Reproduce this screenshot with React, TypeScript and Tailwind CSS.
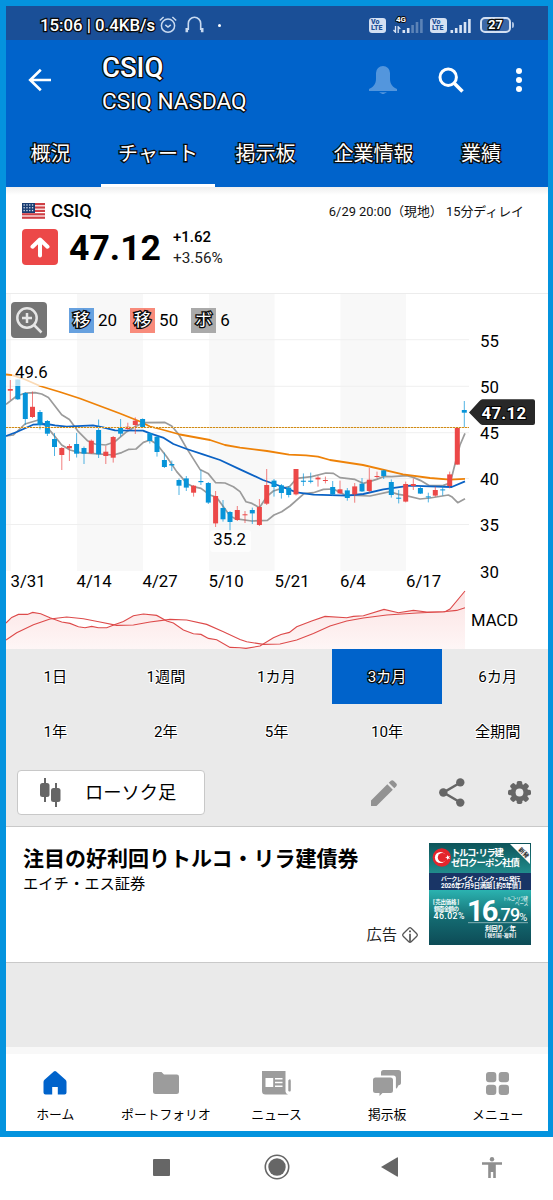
import { clsx } from "clsx";

const OUTLINE = "text-white [-webkit-text-stroke:2.6px_#0a0a0a] [paint-order:stroke_fill]";

// Chart data
// x, wick top, wick bottom, body top, body bottom, direction
type Candle = [number, number, number, number, number, "u" | "d"];

const CANDLES: Candle[] = [
  [10.3, 380, 400, 389, 390.7, "u"],
  [17.8, 379.5, 400, 379.5, 399.3, "d"],
  [25.3, 392, 425, 393, 419, "d"],
  [32.5, 391.5, 418, 406.8, 417, "u"],
  [40, 410, 429.5, 412, 425, "d"],
  [47.4, 420, 436, 421, 433.7, "d"],
  [54.5, 433, 456, 439, 447, "d"],
  [61.8, 447, 470, 448, 455, "u"],
  [69.4, 444, 461, 446, 448.3, "u"],
  [76.6, 433, 457.5, 444, 453.7, "d"],
  [84, 446.5, 464, 448, 453.7, "d"],
  [91.3, 439.5, 454, 440.7, 453.3, "u"],
  [98.6, 419.5, 458, 430, 454.3, "d"],
  [105.8, 446, 464, 451.7, 456, "u"],
  [113.2, 436, 462.6, 437, 457.7, "u"],
  [120.6, 419, 436.6, 428, 433.7, "d"],
  [127.8, 422.7, 430, 426.7, 429, "u"],
  [135.3, 417.4, 434, 420.7, 425, "u"],
  [142.6, 418.4, 428, 419, 427, "d"],
  [149.8, 432, 443.5, 433.4, 441, "d"],
  [157, 436, 456.6, 436.7, 452, "d"],
  [164.4, 452.6, 468, 460, 467, "d"],
  [171.8, 460.6, 471, 464, 465.5, "d"],
  [179, 478.5, 495, 480, 485.7, "d"],
  [186.3, 476, 491, 478.4, 487.6, "d"],
  [193.6, 485, 496.6, 485.7, 492.7, "u"],
  [200.9, 470, 485, 481, 482.2, "d"],
  [208.3, 482, 504, 483, 502.6, "d"],
  [215.6, 491, 527, 496, 523.4, "u"],
  [223, 500, 521.6, 508, 519.3, "d"],
  [230, 511, 531, 512, 522, "d"],
  [237.3, 506, 521, 510, 520, "u"],
  [245, 511, 523, 514.3, 515.3, "u"],
  [252.3, 507.6, 524, 510, 513.4, "d"],
  [259.4, 499, 526, 507, 525, "u"],
  [266.7, 469, 505, 485, 503.7, "u"],
  [274, 479, 496.6, 480.6, 487, "d"],
  [281.4, 484, 498.6, 485.3, 493, "d"],
  [288.7, 486, 497.4, 487.6, 495, "d"],
  [296, 469, 495.4, 469, 494.4, "u"],
  [303.4, 473.4, 486, 480.7, 481.8, "d"],
  [310.7, 472.6, 483.4, 480.7, 481.8, "d"],
  [318, 476, 486.6, 477.6, 479.4, "u"],
  [325.4, 476.6, 483.4, 480, 481, "u"],
  [332.7, 481, 496, 487, 494.4, "d"],
  [340, 480.6, 494, 489.3, 493.4, "u"],
  [347.3, 488, 500.7, 490.4, 498, "d"],
  [354.7, 483, 502.7, 486.4, 494.4, "u"],
  [362, 478, 492, 483.7, 491.4, "d"],
  [369.3, 468, 492.6, 479.7, 491, "u"],
  [377, 471.6, 478.4, 476, 477, "u"],
  [383.7, 469.7, 479, 470.4, 476, "d"],
  [391.3, 479.4, 497.6, 482, 495, "d"],
  [398.7, 490, 503.4, 497.7, 498.7, "d"],
  [405.7, 481.6, 502.4, 484, 501.6, "u"],
  [413.3, 478.4, 490, 484, 486, "u"],
  [420.4, 486.7, 494, 488, 493.6, "d"],
  [428.3, 492.7, 502.4, 496.4, 497.4, "d"],
  [435.3, 486.7, 496.7, 490, 495.6, "u"],
  [442.7, 486, 495.6, 489.4, 490.4, "d"],
  [449.7, 471.6, 488.4, 474.4, 486, "u"],
  [457.3, 427.7, 464.6, 427.7, 464.6, "u"],
  [464.3, 401, 427.3, 410, 412.7, "d"],
];

const MA50 =
  "6,374.5 12,375.2 24,379 40,386 60,392 80,398.5 100,406 120,413.5 140,421.5 150,426.5 160,429 180,434.5 210,440 225,445 240,447.6 267,451 289,454.7 306,455.3 318,456.6 330,460 363,465 403,474.3 430,478 450,479.7 465,478.8";
const MA20 =
  "6,436 16.7,432 33,424.7 46.7,424 55,425.4 66.7,426.6 93,425.3 103,427.4 115,430.4 143,430.6 150,433.4 163,437.6 173.4,444 186.7,449 203,454.4 220,460 240,469.4 263,480 280,486 296.6,492.4 313.4,494.6 346.7,495.6 363.4,494 383.4,489.4 410,485.6 430,486.4 451.7,487 465,481.4";
const BAND_HIGH =
  "6,404.4 16.7,396 25,393.2 35,392.7 41.7,394 48.4,397.4 61.7,414.7 69.4,419.4 78.4,431.7 87.4,440.7 95,444 105.7,445 115,441.7 126.7,431.7 135,426.7 143.4,422.7 165,422.4 171.7,426 178.4,434 186.7,448.4 200,469.4 208,473.4 215.7,482.7 225,483 233.4,486.7 240,491.6 246,501.7 252,503.4 259.4,507.7 266.7,496.7 273.4,491 281.7,488.4 289.4,486.7 296.7,478.4 311.7,476.6 326,473 333.4,473.4 340,477.6 355,479.4 363.4,483.4 376.7,479.4 384,476.4 391.7,476.6 406.7,475.6 413.4,477.4 420.7,480.6 429,485.6 443.4,485.4 450,483 452,476 457.3,455 460,445 465,433.4";
const BAND_LOW =
  "6,436 13.4,435 25,424 38.4,420 46.7,426.6 55,436.6 61.7,445 70,450 80,452.6 113.4,455 121.7,452.6 128.4,449.4 136,449 143.4,442.4 150,440 156.7,444 166.7,456.7 176.7,471.6 181.7,477.4 186.7,483.4 193.4,486.7 201,488.4 210,495 216.7,497.4 223.4,506.7 230,516 235,518.6 251.7,521 267.4,520.4 274,515 281.7,511.7 290,506 304,493.7 313.4,492.7 323.4,489.4 333.4,489 345,495 370,496 390,491.7 398.4,494.4 405,495.4 420,499 430,498 448.4,495 451.7,496.7 457.7,502.7 465,498.7";
const MACD =
  "6,623 11.7,617.4 18.4,614.4 27.4,614.4 32.7,612.4 40.7,613.7 50,617.7 61.7,622 70,623.4 78.4,626.7 85,627.7 91.7,626.4 98.4,627.7 106.7,627.7 115,624.4 123.4,621.4 133.4,615.7 143.4,614 156.7,615.4 166.7,621 173.4,623 183.4,630 193.4,633.7 201,634.4 208.4,638.4 216.7,639.7 230,647.4 240,647.7 246,648.4 260,646 273.4,637.7 281,634.5 289.4,632.4 296.7,626.7 311.7,621 325,616.4 346.7,617.7 353.4,616.4 363.4,615.7 384,609.4 398.4,612.7 413.4,610.4 426.7,612 445,611.7 450,609 465,591";
const SIGNAL =
  "6,640 16.7,632.7 33.4,624.7 50,619 66.7,617 83.4,618.7 100,622 116.7,625.4 133.4,625 150,622 170,619.4 186.7,620 206.7,624.4 223.4,631.7 240,639.4 246.7,641.7 263.4,644.4 280,644 296.7,640 313.4,633.4 330,626 346.7,621 363.4,618 386.7,615 416.7,613 443.4,611.7 456.7,610.4 465,607.7";

const GRID_Y = [339.7, 386.3, 432.7, 478.5, 524.5];
const STRIPES = [[6, 5], [77, 66], [209, 65.5], [340.5, 65.5]];
const PRICES = [
  { label: "55", y: 346.5 },
  { label: "50", y: 392.7 },
  { label: "45", y: 439 },
  { label: "40", y: 485 },
  { label: "35", y: 531.3 },
  { label: "30", y: 577.5 },
];
const DATES = [
  { label: "3/31", x: 10.5 },
  { label: "4/14", x: 76.5 },
  { label: "4/27", x: 142.5 },
  { label: "5/10", x: 208.5 },
  { label: "5/21", x: 274.5 },
  { label: "6/4", x: 340 },
  { label: "6/17", x: 406 },
];

const TABS = [
  { label: "概況", width: "w-[101px]" },
  { label: "チャート", width: "w-[114px]", active: true },
  { label: "掲示板", width: "w-[101px]" },
  { label: "企業情報", width: "w-[115px]" },
  { label: "業績", width: "w-[100px]" },
];

const PERIODS = ["1日", "1週間", "1カ月", "3カ月", "6カ月", "1年", "2年", "5年", "10年", "全期間"];

function VoLte() {
  return (
    <div className="flex h-[15px] w-[17px] flex-col rounded-[3px] bg-[#d3e0f2] px-[2px] pt-[1px] text-[7px] leading-[6.5px] font-black text-[#1b4f96]">
      <span>Vo</span>
      <span>LTE</span>
    </div>
  );
}

function Signal({ strong }: { strong: number }) {
  return (
    <svg width="22" height="15" viewBox="0 0 22 15" fill="#d9e4f4">
      {[3, 5, 8, 11, 14].map((h, i) => (
        <rect key={h} x={i * 4.4 + 0.5} y={15 - h} width="2.6" height={h} opacity={i < strong ? 1 : 0.35} />
      ))}
    </svg>
  );
}

function StatusBar() {
  return (
    <div className="flex h-10 items-center bg-[#1a4f97] pt-[10px] pl-10">
      <span className={clsx("w-[119px] text-[16.8px] leading-none font-medium whitespace-nowrap", OUTLINE)}>
        15:06 | 0.4KB/s
      </span>
      <svg width="18" height="18" viewBox="0 0 18 18" fill="none" stroke="#c9daf0" strokeWidth="1.5">
        <circle cx="9" cy="9.7" r="6.6" />
        <path d="M6.3 8.8 9 11l2.8-2.2M.8 4.5 4.6 1M17.2 4.5 13.4 1" />
      </svg>
      <svg className="ml-2" width="19" height="18" viewBox="0 0 19 18" fill="none" stroke="#c9daf0" strokeWidth="1.6">
        <path d="M3.3 14V7.5a6.2 6.2 0 0 1 12.4 0V14" />
        <path d="M1.8 12v4.3M17.2 12v4.3" strokeWidth="2.6" />
      </svg>
      <span className="ml-[14px] size-[3px] rounded-full bg-white" />
      <div className="ml-[148px]">
        <VoLte />
      </div>
      <div className="relative mr-[6px] ml-[16px]">
        <Signal strong={2} />
        <svg className="absolute top-[8px] -left-[9px]" width="8" height="7" viewBox="0 0 8 7" fill="none" stroke="#d9e4f4" strokeWidth="1.3">
          <path d="M2.5 0v6.200L.5 4M5.200 7V.8L7.300 3" />
        </svg>
        <span className="absolute -top-[2px] -left-[6px] text-[8px] leading-none font-bold text-white [-webkit-text-stroke:1.8px_#0a0a0a] [paint-order:stroke_fill]">
          4G
        </span>
      </div>
      <VoLte />
      <div className="mr-[8px] ml-[3px]">
        <Signal strong={5} />
      </div>
      <div className="flex h-4 w-[31px] items-center justify-center rounded-[5px] border-2 border-[#d3e0f2] bg-[#3b68a8]">
        <span className={clsx("text-[12.5px] leading-none font-bold", OUTLINE)}>27</span>
      </div>
      <span className="ml-px h-[6px] w-[2px] rounded-r bg-[#a9c0e0]" />
    </div>
  );
}

function Header() {
  return (
    <header className="h-[147px] bg-[#0063cb]">
      <div className="flex h-[79px] items-center">
        <svg className="ml-[28px]" width="24" height="24" viewBox="0 0 24 24" fill="none" stroke="#fff" strokeWidth="2.6">
          <path d="M23 12H2.5M12.8 1.8 2.2 12l10.6 10.2" />
        </svg>
        <div className="ml-[50px] w-[267px] pt-[9px]">
          <h1 className={clsx("text-[27.5px] leading-[34px] font-medium", OUTLINE)}>CSIQ</h1>
          <p className={clsx("text-[22.6px] leading-[33px]", OUTLINE)}>CSIQ NASDAQ</p>
        </div>
        <svg width="28" height="28" viewBox="0 0 28 28" fill="#5396dd">
          <path d="M14 0a7 7 0 0 1 7 7v6c0 5 3 8.5 7 10v2H0v-2c4-1.500 7-5 7-10V7a7 7 0 0 1 7-7Z" />
          <path d="M10 26.300h8l-4 2z" />
        </svg>
        <svg className="ml-[41px]" width="26" height="26" viewBox="0 0 26 26" fill="none" stroke="#fff">
          <circle cx="10.2" cy="10.2" r="8.2" strokeWidth="3" />
          <path d="m16 16 8.500 8.500" strokeWidth="3.6" />
        </svg>
        <svg className="ml-[52px]" width="6" height="24" viewBox="0 0 6 24" fill="#fff">
          <circle cx="3" cy="3" r="3" />
          <circle cx="3" cy="12" r="3" />
          <circle cx="3" cy="21" r="3" />
        </svg>
      </div>
      <nav className="flex h-[68px]">
        {TABS.map((tab) => (
          <div
            key={tab.label}
            className={clsx(
              "flex items-center justify-center border-b-[3px] pt-[4px] text-[20px] leading-none whitespace-nowrap",
              tab.width,
              tab.active ? "border-white" : "border-transparent",
              OUTLINE,
            )}
          >
            {tab.label}
          </div>
        ))}
      </nav>
    </header>
  );
}

function UsFlag() {
  return (
    <svg width="23" height="16" viewBox="0 0 23 16">
      <rect width="23" height="16" fill="#fff" />
      {[0, 1, 2, 3, 4].map((i) => (
        <rect key={i} y={i * 3.4} width="23" height="2.2" fill="#cf3f45" />
      ))}
      <rect width="13" height="10" fill="#193d73" />
      {[1.8, 4.6, 7.4].map((y) =>
        [1.5, 4.3, 7.1, 9.9].map((x) => (
          <rect key={`${x}-${y}`} x={x} y={y - 0.5} width="1.3" height="1.3" fill="#dfe6f0" />
        )),
      )}
    </svg>
  );
}

function Quote() {
  return (
    <section className="flex h-[106px] justify-between bg-gradient-to-b from-[#eeeeee] via-white via-[8px] to-white pt-[14px] pr-[29px] pl-[22px]">
      <div>
        <div className="flex h-5 items-center gap-[6px]">
          <UsFlag />
          <span className="pt-px text-[18.3px] leading-none font-medium">CSIQ</span>
        </div>
        <div className="mt-2 flex h-9 items-center">
          <div className="flex size-9 items-center justify-center rounded-[4px] bg-[#ec4848]">
            <svg width="20" height="21" viewBox="0 0 20 21" fill="none" stroke="#fff" strokeWidth="4" strokeLinecap="round" strokeLinejoin="round">
              <path d="M10 18.500V3M2.500 9.700 10 2.500l7.500 7.200" />
            </svg>
          </div>
          <span className="ml-[11px] w-[104px] pt-[3px] text-[35.600px] leading-none font-bold">47.12</span>
          <div className="pt-px">
            <div className="text-[15px] leading-[21px] font-medium">+1.62</div>
            <div className="text-[15.3px] leading-[21px] text-[#222]">+3.56%</div>
          </div>
        </div>
      </div>
      <div className="h-5 pt-px text-[12.9px] leading-5 whitespace-pre text-[#111]">6/29 20:00（現地） 15分ディレイ</div>
    </section>
  );
}

function Legend({ mark, value, color }: { mark: string; value: string; color: string }) {
  return (
    <div className="flex items-center gap-1">
      <span className={clsx("flex size-[25px] items-center justify-center pt-px text-[17.5px] leading-none", color, OUTLINE)}>{mark}</span>
      <span className="pt-px text-[17px] leading-none">{value}</span>
    </div>
  );
}

function Chart() {
  return (
    <section className="relative h-[356px] bg-white">
      <svg className="block" width="553" height="356" viewBox="0 293 553 356" fontSize="16.8">
        <defs>
          <linearGradient id="macdFill" x1="0" y1="0" x2="0" y2="1">
            <stop offset="0" stopColor="#e94b4b" stopOpacity="0.16" />
            <stop offset="1" stopColor="#e94b4b" stopOpacity="0.05" />
          </linearGradient>
        </defs>
        {STRIPES.map(([x, w]) => (
          <rect key={x} x={x} y="293" width={w} height="278" fill="#f8f8f8" />
        ))}
        <rect y="293" width="553" height="1" fill="#ececec" />
        {GRID_Y.map((y) => (
          <path key={y} d={`M6 ${y}H469`} stroke="#efefef" />
        ))}
        <g fill="none" strokeLinejoin="round">
          <polyline points={BAND_HIGH} stroke="#9b9b9b" strokeWidth="1.7" />
          <polyline points={BAND_LOW} stroke="#9b9b9b" strokeWidth="1.7" />
          <polyline points={MA50} stroke="#ee8208" strokeWidth="1.8" />
          <polyline points={MA20} stroke="#0b62c4" strokeWidth="1.8" />
        </g>
        {CANDLES.map(([x, hi, lo, top, bottom, dir]) => {
          const fill = dir === "u" ? "#ec4848" : "#0794d9";
          return (
            <g key={x} fill={fill}>
              <rect x={x - 0.5} y={hi} width="1" height={lo - hi} opacity="0.7" />
              <rect x={x - 2.5} y={top} width="5" height={bottom - top} />
            </g>
          );
        })}
        <path d="M6 427.500H469" stroke="#f3d9a4" />
        <path d="M6 427.500H469" stroke="#cf8a18" strokeDasharray="2 1" />

        <rect x="12" y="364" width="40" height="22" rx="3" fill="#fff" opacity="0.7" />
        <text x="15" y="377.700">49.6</text>
        <rect x="210" y="530" width="41" height="22" rx="3" fill="#fff" opacity="0.7" />
        <text x="213.300" y="545">35.2</text>

        {PRICES.map((p) => (
          <text key={p.label} x="480" y={p.y}>{p.label}</text>
        ))}
        {DATES.map((d) => (
          <text key={d.label} x={d.x} y="586.500">{d.label}</text>
        ))}
        <path d="M469 412.500 479.500 401q1.500-1.700 3-1.700H533q2 0 2 2V423q0 2-2 2H482.500q-1.500 0-3-1.700Z" fill="#282828" />
        <text x="481.500" y="419.200" fontWeight="700" fill="#fff" stroke="#000" strokeWidth="2" paintOrder="stroke" letterSpacing=".3">
          47.12
        </text>

        <polygon points={`6,649 ${MACD} 465,649`} fill="url(#macdFill)" />
        <polyline points={MACD} fill="none" stroke="#dd4a4a" strokeWidth="1.1" />
        <polyline points={SIGNAL} fill="none" stroke="#dd4a4a" strokeWidth="1.1" />
        <text x="471" y="625.700" fontSize="16.6">MACD</text>
      </svg>

      <div className="absolute top-[9px] left-[11px] flex items-center">
        <div className="flex size-9 items-center justify-center rounded-[4px] bg-[#757575]">
          <svg width="28" height="28" viewBox="0 0 28 28" fill="none" stroke="#e6e6e6" strokeWidth="2.5">
            <circle cx="12" cy="12" r="9.7" />
            <path d="M12 7v10M7 12h10M19 19l7.500 7.500" />
          </svg>
        </div>
        <div className="ml-[22px] flex gap-[13px]">
          <Legend mark="移" value="20" color="bg-[#67a1df]" />
          <Legend mark="移" value="50" color="bg-[#f88b7b]" />
          <Legend mark="ボ" value="6" color="bg-[#aaaaaa]" />
        </div>
      </div>
    </section>
  );
}

function Periods() {
  return (
    <div className="grid h-[110px] grid-cols-5 bg-[#eaeaea]">
      {PERIODS.map((p) => (
        <div
          key={p}
          className={clsx(
            "flex h-[55px] items-center justify-center pt-[2px] text-[15.200px] leading-none",
            p === "3カ月" ? `bg-[#0063cb] ${OUTLINE}` : "[-webkit-text-stroke:2px_#fff] [paint-order:stroke_fill]",
          )}
        >
          {p}
        </div>
      ))}
    </div>
  );
}

function Toolbar() {
  return (
    <div className="flex h-[67px] items-center bg-[#eaeaea] pl-[17px]">
      <div className="flex h-[45px] w-[188px] items-center rounded-[4px] border border-[#c8c8c8] bg-white pl-[22px]">
        <svg width="21" height="29" viewBox="0 0 21 29" fill="#666">
          <rect x="4" width="2" height="24" />
          <rect y="5" width="9.5" height="14" rx="2.5" />
          <rect x="15" y="5" width="2" height="24" />
          <rect x="11" y="10" width="9.5" height="14" rx="2.5" />
        </svg>
        <span className="ml-6 pt-[2px] text-[18.3px] leading-none">ローソク足</span>
      </div>
      <svg className="ml-[166px]" width="26" height="26" viewBox="0 0 26 26" fill="#929292">
        <path d="M0 26v-5.500L16.300 4.200l5.500 5.500L5.500 26ZM17.800 2.700 19.600.9q1.600-1.500 3.200 0l2.300 2.300q1.600 1.600 0 3.200l-1.800 1.800Z" />
      </svg>
      <svg className="ml-[42px]" width="26" height="29" viewBox="0 0 26 29" fill="#666">
        <path d="M21.500 4.500 4.500 14.500l17 10" fill="none" stroke="#666" strokeWidth="2.6" />
        <circle cx="21.3" cy="4.4" r="4.2" />
        <circle cx="4.3" cy="14.5" r="4.2" />
        <circle cx="21.3" cy="24.6" r="4.2" />
      </svg>
      <svg className="ml-[43px]" width="23" height="23" viewBox="0 0 23 23">
        <g fill="#666">
          {[0, 45, 90, 135].map((a) => (
            <rect key={a} x="8.7" y="0" width="5.6" height="23" rx="1.8" transform={`rotate(${a} 11.5 11.5)`} />
          ))}
          <circle cx="11.5" cy="11.5" r="8.8" />
        </g>
        <circle cx="11.5" cy="11.5" r="3.9" fill="#eaeaea" />
      </svg>
    </div>
  );
}

function BondBanner() {
  return (
    <svg width="102" height="102" viewBox="0 0 102 102" fill="#fff">
      <defs>
        <linearGradient id="bannerTop" x1="0" y1="0" x2="0" y2="1">
          <stop offset="0" stopColor="#0d5359" />
          <stop offset="1" stopColor="#218c8c" />
        </linearGradient>
        <linearGradient id="bannerBottom" x1="0" y1="0" x2="0" y2="1">
          <stop offset="0" stopColor="#2bb3b0" />
          <stop offset="0.55" stopColor="#13686f" />
          <stop offset="1" stopColor="#0d4b56" />
        </linearGradient>
      </defs>
      <rect width="102" height="30" fill="url(#bannerTop)" />
      <rect y="30" width="102" height="17" fill="#193566" />
      <rect y="47" width="102" height="55" fill="url(#bannerBottom)" />
      <circle cx="12.8" cy="14.5" r="9.2" fill="#e4242c" />
      <circle cx="11.5" cy="14.5" r="5.6" />
      <circle cx="13.3" cy="14.5" r="4.5" fill="#e4242c" />
      <path d="m16 14.500 1.900-.6.100-2 1.200 1.600 1.900-.6-1.200 1.600 1.200 1.600-1.900-.6-1.200 1.600-.1-2Z" />
      <path d="M81 1h20v20Z" />
      <text x="89" y="7" fontSize="6" fontWeight="700" fill="#222" transform="rotate(45 89 7)">新発</text>
      <g fontWeight="700">
        <text x="22" y="12.8" fontSize="9.4" textLength="53">トルコ･リラ建</text>
        <text x="22" y="23" fontSize="9.4" textLength="69">ゼロクーポン社債</text>
        <text x="12" y="38" fontSize="5.8" textLength="79">バークレイズ・バンク・PLC 発行</text>
        <text x="12" y="45.300" fontSize="6.3" textLength="80">2026年7月9日満期 [ 約5年債 ]</text>
      </g>
      <text x="4" y="61" fontSize="5.5" fontWeight="700" textLength="26">[ 売出価格 ]</text>
      <text x="5" y="67.500" fontSize="5.5" fontWeight="700" textLength="25">額面金額の</text>
      <text x="4.500" y="76" fontSize="8.8" fontWeight="500" textLength="31">46.02%</text>
      <text x="38" y="78" fontSize="29" fontWeight="700" letterSpacing="-1.9">
        16
        <tspan fontSize="18" fontWeight="500" letterSpacing="-.9">.79</tspan>
        <tspan fontSize="11" fontWeight="400">%</tspan>
      </text>
      <text x="74" y="57" fontSize="4.5" textLength="25">トルコ･リラ建</text>
      <text x="86" y="62" fontSize="4.5">ベース</text>
      <rect x="39" y="79.5" width="60" height=".6" opacity="0.8" />
      <text x="56" y="88.300" fontSize="6.5" fontWeight="700" textLength="31">利回り／年</text>
      <text x="56" y="94" fontSize="4.8" fontWeight="700" textLength="31">[ 税引前･複利 ]</text>
    </svg>
  );
}

function AdCard() {
  return (
    <section className="flex h-[137px] border-y border-[#c9c9c9] bg-white pt-4 pl-[23px]">
      <div className="flex h-[102px] w-[395px] flex-col">
        <h2 className="pt-px text-[21px] leading-[30px] font-bold whitespace-nowrap">注目の好利回りトルコ・リラ建債券</h2>
        <p className="text-[15.3px] leading-[21px]">エイチ・エス証券</p>
        <div className="mt-[30px] flex items-center justify-end gap-[5px] text-[15.3px] leading-[20px] text-[#222]">
          広告
          <svg width="16" height="16" viewBox="0 0 16 16" fill="none" stroke="#555" strokeWidth="1.3">
            <path d="M6.800 1.200q1.200-1 2.400 0l5.600 5.600q1 1.200 0 2.400l-5.600 5.600q-1.200 1-2.400 0L1.200 9.200q-1-1.200 0-2.400Z" />
            <path d="M8 6.800V15" strokeWidth="1.7" />
            <path d="M8 3.500v1.800" strokeWidth="1.9" />
          </svg>
        </div>
      </div>
      <div className="ml-[11px]">
        <BondBanner />
      </div>
    </section>
  );
}

const NAV_ITEMS = [
  {
    label: "ホーム",
    icon: (
      <svg width="24" height="24" viewBox="0 0 24 24" fill="#0063cb">
        <path d="M10.800.6q1.200-1 2.400 0L22.500 8.800q1 1 1 2.200v10.500q0 2-2 2h-6.700V16H9.200v7.500H2.500q-2 0-2-2V11q0-1.200 1-2.200Z" />
      </svg>
    ),
  },
  {
    label: "ポートフォリオ",
    icon: (
      <svg width="26" height="22" viewBox="0 0 26 22" fill="#9c9c9c">
        <path d="M2 0h6.500L11 2.500h12.800q2.200 0 2.200 2.200v14.800Q26 22 23.500 22h-21Q0 22 0 19.500V2.200Q0 0 2 0Z" />
      </svg>
    ),
  },
  {
    label: "ニュース",
    icon: (
      <svg width="29" height="24" viewBox="0 0 29 24" fill="#9c9c9c">
        <path d="M0 0h23.500v20.500q0 2 2.500 3H3.500Q0 23.500 0 20Z" />
        <path d="M26.300 9.500q2.500-3 2.500 1v8.500q0 2.500-2.500 1Z" />
        <path d="M3.500 7h7.700v9H3.500ZM13 7h7.500v1.600H13ZM13 10.700h7.500v1.600H13ZM13 14.400h7.500V16H13Z" fill="#fff" />
      </svg>
    ),
  },
  {
    label: "掲示板",
    icon: (
      <svg width="28" height="26" viewBox="0 0 28 26" fill="#9c9c9c">
        <path d="M8 5.500V2.500Q8 0 10.500 0h15Q28 0 28 2.500v10q0 2.800-2.500 2.800l-1.800 3.500-.8-1V8q0-2.500-2.500-2.500Z" />
        <path d="M2.500 7.500H17.500q2.500 0 2.500 2.500v10.500q0 2.500-2.500 2.500H9.500L6.500 26v-3h-4Q0 23 0 20.500V10q0-2.500 2.500-2.500Z" />
      </svg>
    ),
  },
  {
    label: "メニュー",
    icon: (
      <svg width="23" height="23" viewBox="0 0 23 23" fill="#9c9c9c">
        <rect width="10.3" height="10.3" rx="3" />
        <rect x="12.7" width="10.3" height="10.3" rx="3" />
        <rect y="12.7" width="10.3" height="10.3" rx="3" />
        <rect x="12.7" y="12.7" width="10.3" height="10.3" rx="3" />
      </svg>
    ),
  },
];

function BottomNav() {
  return (
    <nav className="border-t-[7px] border-[#f8f8f8] bg-white">
      <div className="grid h-[83px] grid-cols-5">
        {NAV_ITEMS.map((item) => (
          <div key={item.label} className="flex flex-col items-center pt-4">
            <div className="flex h-[26px] items-center">{item.icon}</div>
            <span className="mt-[9px] text-[12.8px] leading-5 whitespace-nowrap">{item.label}</span>
          </div>
        ))}
      </div>
    </nav>
  );
}

function SystemNav() {
  return (
    <div className="grid h-[63px] grid-cols-5 items-center justify-items-center bg-white pb-[3px]">
      <span />
      <span className="-ml-2 size-[17px] rounded-[1px] bg-[#666]" />
      <svg className="ml-px" width="26" height="26" viewBox="0 0 26 26" fill="#666">
        <circle cx="13" cy="13" r="11.7" fill="none" stroke="#666" strokeWidth="1.6" />
        <circle cx="13" cy="13" r="8.7" />
      </svg>
      <svg className="ml-1" width="17" height="20" viewBox="0 0 17 20" fill="#666">
        <path d="M0 10 16 .5q1-.5 1 .5v18q0 1-1 .5Z" />
      </svg>
      <svg className="-ml-3" width="20" height="21" viewBox="0 0 20 21" fill="#8f8f8f">
        <circle cx="10" cy="2.2" r="2.2" />
        <path d="M0 5.200h20v2.500h-6.200V21h-2.600v-6H8.800v6H6.200V7.700H0Z" />
      </svg>
    </div>
  );
}

export default function App() {
  return (
    <div className="relative h-[1200px] w-[553px] overflow-hidden bg-white font-[Roboto,'Noto_Sans_CJK_JP',sans-serif] text-black">
      <StatusBar />
      <Header />
      <Quote />
      <Chart />
      <Periods />
      <Toolbar />
      <AdCard />
      <div className="h-[84px] bg-[#eaeaea]" />
      <BottomNav />
      <SystemNav />
      {/* Highlight frame around the app window */}
      <div className="pointer-events-none absolute inset-x-0 top-0 h-[1137px] border-[6px] border-r-[5px] border-[#0493de]" />
    </div>
  );
}
